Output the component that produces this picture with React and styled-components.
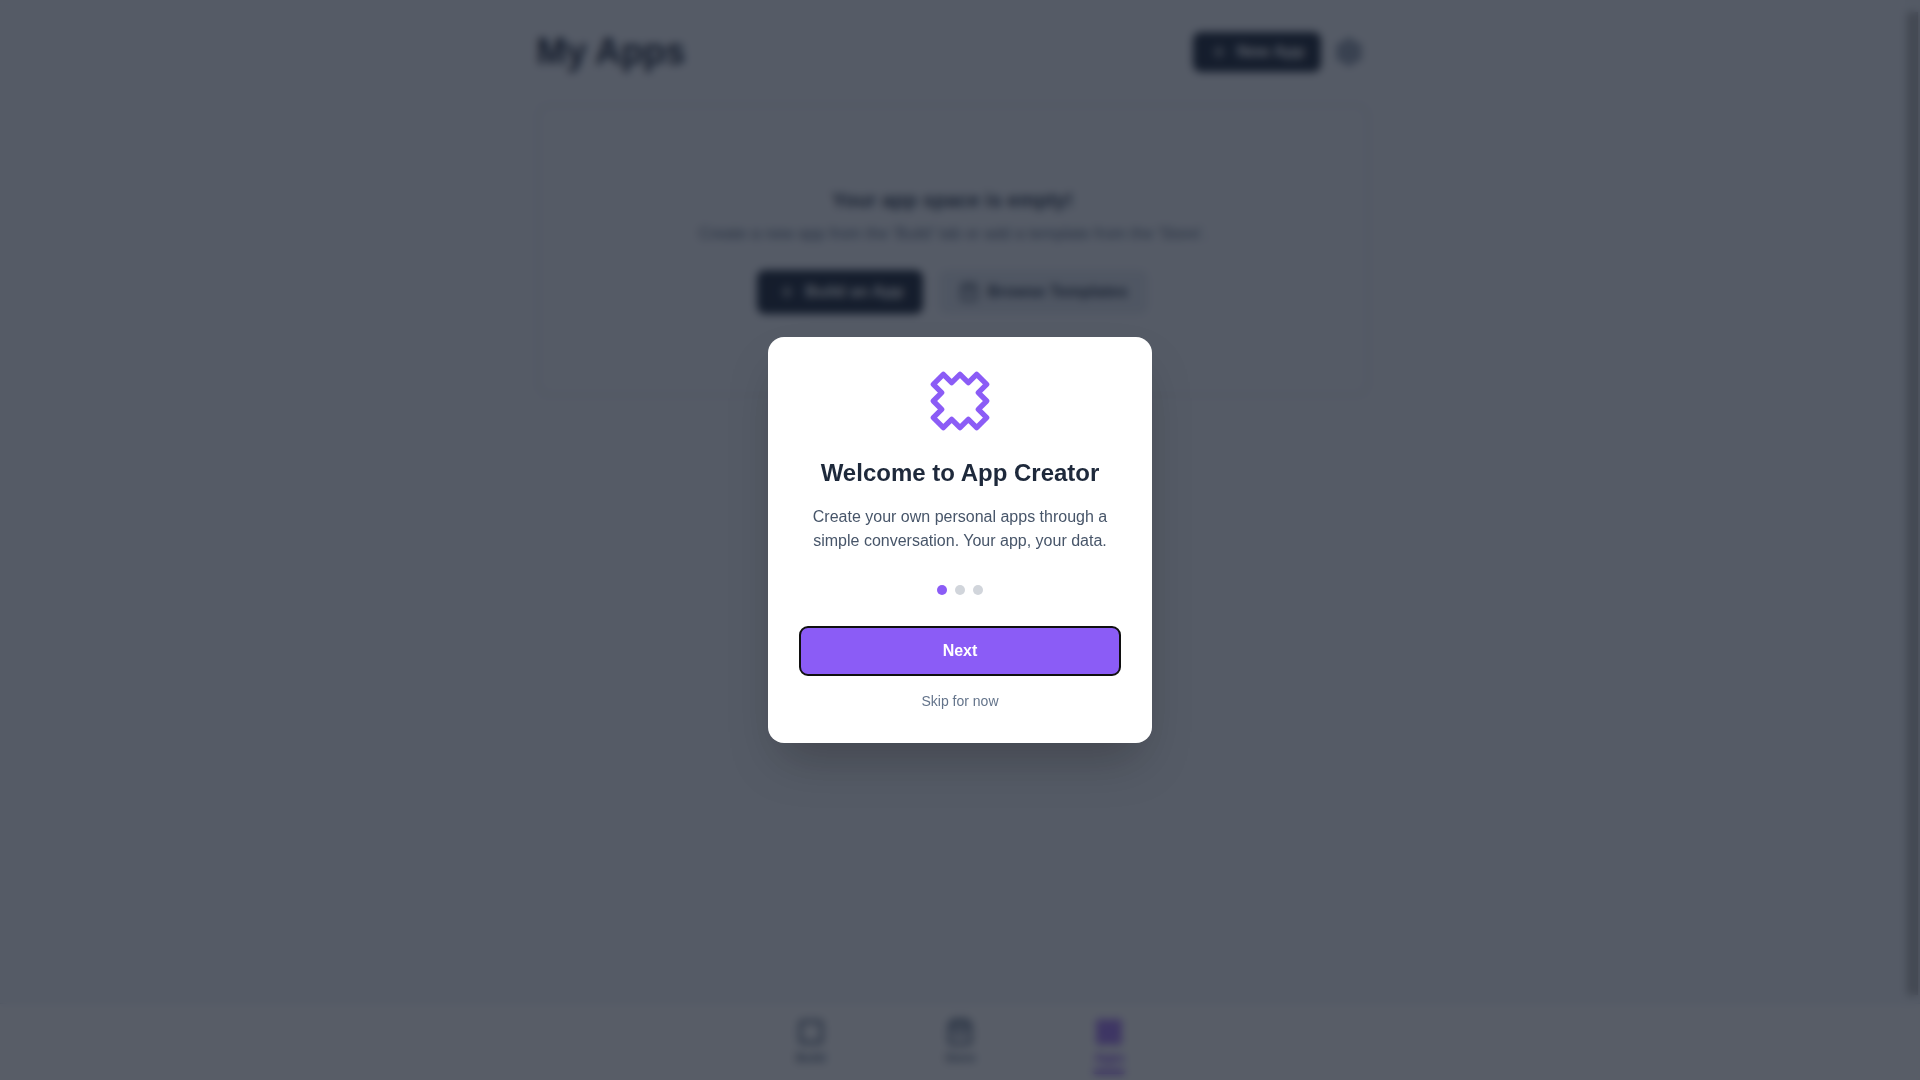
import React, { useState } from 'react';
import styled, { createGlobalStyle } from 'styled-components';
import { LayoutGrid, Plus, Settings, ShoppingBag, Square } from 'lucide-react';

const tabs = [
  { name: 'Build', Icon: Square },
  { name: 'Store', Icon: ShoppingBag },
  { name: 'Apps', Icon: LayoutGrid },
];

const steps = [0, 1, 2];

export default function App() {
  const [tab, setTab] = useState('Apps');
  const [step, setStep] = useState(0);
  const [open, setOpen] = useState(true);

  const handleNext = () => {
    if (step === steps.length - 1) {
      setOpen(false);
      return;
    }
    setStep((prev) => prev + 1);
  };

  return (
    <>
      <GlobalStyle />
      <Page>
        <Body>
          <Main>
            <Header>
              <PageTitle>My Apps</PageTitle>
              <HeaderActions>
                <Button type="button" $dark $small>
                  <Plus size={20} />
                  New App
                </Button>
                <BtnIcon type="button" aria-label="Settings">
                  <Settings size={28} strokeWidth={3} />
                </BtnIcon>
              </HeaderActions>
            </Header>
            <EmptyBox>
              <EmptyTitle>Your app space is empty!</EmptyTitle>
              <EmptyText>Create a new app from the 'Build' tab or add a template from the 'Store'.</EmptyText>
              <EmptyActions>
                <Button type="button" $dark>
                  <Plus size={20} />
                  Build an App
                </Button>
                <Button type="button">
                  <ShoppingBag size={20} strokeWidth={2} />
                  Browse Templates
                </Button>
              </EmptyActions>
            </EmptyBox>
          </Main>
          <ScrollRail>
            <ScrollThumb />
          </ScrollRail>
        </Body>
        <Nav>
          <NavList>
            {tabs.map(({ name, Icon }) => (
              <NavButton key={name} type="button" $active={tab === name} onClick={() => setTab(name)}>
                <Icon size={28} strokeWidth={3} />
                {name}
                <NavBar $active={tab === name} />
              </NavButton>
            ))}
          </NavList>
        </Nav>
      </Page>
      {open && (
        <Overlay>
          <Modal role="dialog" aria-modal="true" aria-labelledby="welcome-title">
            <PatchIcon />
            <ModalTitle id="welcome-title">Welcome to App Creator</ModalTitle>
            <ModalText>Create your own personal apps through a simple conversation. Your app, your data.</ModalText>
            <Dots>
              {steps.map((i) => (
                <Dot key={i} $active={i === step} />
              ))}
            </Dots>
            <BtnNext type="button" autoFocus onClick={handleNext}>Next</BtnNext>
            <BtnSkip type="button" onClick={() => setOpen(false)}>Skip for now</BtnSkip>
          </Modal>
        </Overlay>
      )}
    </>
  );
}

function PatchIcon() {
  return (
    <svg width="64" height="64" viewBox="0 0 24 24" fill="none" stroke="#8b5cf6" strokeWidth="2" strokeLinecap="round" strokeLinejoin="round" aria-hidden="true">
      <path d="M5.75 2 8.875 5.125 12 2 15.125 5.125 18.25 2 22 5.75 18.875 8.875 22 12 18.875 15.125 22 18.25 18.25 22 15.125 18.875 12 22 8.875 18.875 5.75 22 2 18.25 5.125 15.125 2 12 5.125 8.875 2 5.75Z" />
    </svg>
  );
}

const GlobalStyle = createGlobalStyle`
  * {
    box-sizing: border-box;
  }
  body {
    margin: 0;
    font-family: "Liberation Sans", Arial, sans-serif;
    font-size: 16px;
    line-height: 24px;
    color: #1e293b;
    background-color: #f5f8fc;
  }
  h1, h2, p {
    margin: 0;
  }
  button {
    border: none;
    padding: 0;
    font: inherit;
    color: inherit;
    background: none;
    cursor: pointer;
  }
`;
const Page = styled.div`
  display: flex;
  flex-direction: column;
  height: 100vh;
`;
const Body = styled.div`
  flex: 1;
  display: flex;
  min-height: 0;
`;
const Main = styled.main`
  flex: 1;
  width: 100%;
  max-width: 896px;
  margin: 0 auto;
  padding: 32px;
`;
const ScrollRail = styled.div`
  width: 15px;
  padding: 12px 2px 8px;
  background-color: #f1f5f9;
`;
const ScrollThumb = styled.div`
  height: 100%;
  background-color: #b4b4b4;
`;
const Header = styled.header`
  display: flex;
  align-items: center;
  justify-content: space-between;
  margin-bottom: 32px;
`;
const PageTitle = styled.h1`
  font-size: 36px;
  line-height: 40px;
  font-weight: 700;
`;
const HeaderActions = styled.div`
  display: flex;
  align-items: center;
  gap: 8px;
`;
const Button = styled.button`
  display: flex;
  align-items: center;
  gap: 8px;
  padding: ${({ $small }) => ($small ? '8px 16px' : '10px 20px')};
  border-radius: 8px;
  font-weight: 700;
  color: ${({ $dark }) => ($dark ? '#fff' : '#334155')};
  background-color: ${({ $dark }) => ($dark ? '#1e293b' : '#e2e8f0')};
`;
const BtnIcon = styled.button`
  display: flex;
  padding: 6px;
  border-radius: 20px;
  color: #64748b;
`;
const EmptyBox = styled.section`
  display: flex;
  flex-direction: column;
  align-items: center;
  gap: 8px;
  padding: 80px 16px;
  border: 2px dashed #cbd5e1;
  border-radius: 12px;
  text-align: center;
`;
const EmptyTitle = styled.h2`
  font-size: 20px;
  line-height: 28px;
  font-weight: 700;
  color: #334155;
`;
const EmptyText = styled.p`
  color: #64748b;
`;
const EmptyActions = styled.div`
  display: flex;
  gap: 16px;
  margin-top: 16px;
`;
const Nav = styled.nav`
  border-top: 1px solid #e2e8f0;
  background-color: #fff;
`;
const NavList = styled.div`
  display: flex;
  max-width: 448px;
  margin: 0 auto;
`;
const NavButton = styled.button`
  flex: 1;
  display: flex;
  flex-direction: column;
  align-items: center;
  gap: 4px;
  padding: 14px 0 6px;
  font-size: 12px;
  line-height: 16px;
  font-weight: 700;
  color: ${({ $active }) => ($active ? '#7c3aed' : '#64748b')};
`;
const NavBar = styled.span`
  width: 32px;
  height: 4px;
  border-radius: 2px;
  background-color: ${({ $active }) => ($active ? '#7c3aed' : 'transparent')};
`;
/* covers the whole page while the intro is open */
const Overlay = styled.div`
  position: fixed;
  inset: 0;
  z-index: 50;
  display: flex;
  align-items: center;
  justify-content: center;
  padding: 16px;
  background-color: rgba(17, 24, 39, 0.7);
  backdrop-filter: blur(4px);
`;
const Modal = styled.div`
  display: flex;
  flex-direction: column;
  align-items: center;
  width: 100%;
  max-width: 384px;
  padding: 32px;
  border-radius: 16px;
  text-align: center;
  background-color: #fff;
  box-shadow: 0 25px 50px -12px rgba(0, 0, 0, 0.25);
`;
const ModalTitle = styled.h2`
  margin-top: 24px;
  font-size: 24px;
  line-height: 32px;
  font-weight: 700;
`;
const ModalText = styled.p`
  margin-top: 16px;
  color: #475569;
`;
const Dots = styled.div`
  display: flex;
  gap: 8px;
  margin: 32px 0;
`;
const Dot = styled.span`
  width: 10px;
  height: 10px;
  border-radius: 50%;
  background-color: ${({ $active }) => ($active ? '#8b5cf6' : '#d1d5db')};
`;
const BtnNext = styled.button`
  width: 100%;
  padding: 12px;
  border-radius: 8px;
  font-weight: 700;
  color: #fff;
  background-color: #8b5cf6;
`;
const BtnSkip = styled.button`
  margin-top: 16px;
  font-size: 14px;
  line-height: 20px;
  color: #64748b;
`;
